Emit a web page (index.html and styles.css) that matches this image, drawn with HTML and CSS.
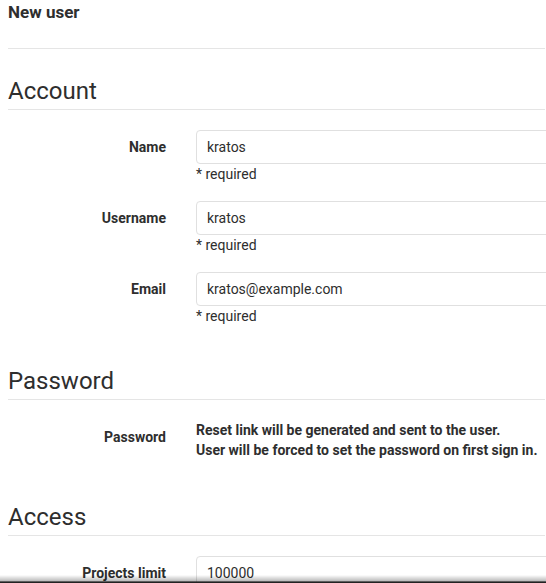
FILE: index.html
```html
<!DOCTYPE html>
<html>
<head>
<meta charset="utf-8">
<link rel="stylesheet" href="styles.css">
</head>
<body>
<div class="page">
  <h3 class="page-title">New user</h3>

  <section class="section">
    <h4 class="section-title">Account</h4>
    <div class="form-group">
      <label class="control-label">Name</label>
      <div class="control">
        <input class="form-control" type="text" value="kratos">
        <div class="help">* required</div>
      </div>
    </div>
    <div class="form-group">
      <label class="control-label">Username</label>
      <div class="control">
        <input class="form-control" type="text" value="kratos">
        <div class="help">* required</div>
      </div>
    </div>
    <div class="form-group">
      <label class="control-label">Email</label>
      <div class="control">
        <input class="form-control" type="text" value="kratos@example.com">
        <div class="help">* required</div>
      </div>
    </div>
  </section>

  <section class="section">
    <h4 class="section-title">Password</h4>
    <div class="form-group static">
      <label class="control-label">Password</label>
      <div class="control">
        <p class="static-text">Reset link will be generated and sent to the user.<br>User will be forced to set the password on first sign in.</p>
      </div>
    </div>
  </section>

  <section class="section">
    <h4 class="section-title">Access</h4>
    <div class="form-group">
      <label class="control-label">Projects limit</label>
      <div class="control">
        <input class="form-control" type="text" value="100000">
      </div>
    </div>
  </section>
</div>
<div class="bottom-shadow"></div>
</body>
</html>
```

FILE: styles.css
```css
html, body {
  margin: 0;
  padding: 0;
  background: #fff;
  overflow: hidden;
}
body {
  font-family: Roboto, "Liberation Sans", sans-serif;
  font-size: 14px;
  line-height: 20px;
  color: #2e2e2e;
}
.page {
  padding: 0 1px 0 8px;
}
.page-title {
  margin: 0 0 4px;
  font-size: 17px;
  font-weight: 700;
  line-height: 24px;
  padding-bottom: 24px;
  border-bottom: 1px solid #e5e5e5;
}
.section {
  display: flow-root;
}
.section-title {
  margin: 23px 0 20px;
  font-size: 24px;
  font-weight: 400;
  line-height: 31px;
  padding-bottom: 2px;
  border-bottom: 1px solid #e5e5e5;
}
.form-group {
  display: grid;
  grid-template-columns: 158px 1fr;
  column-gap: 30px;
  margin-bottom: 17px;
}
.form-group.static {
  margin-bottom: 19px;
}
.control-label {
  text-align: right;
  font-weight: 700;
  padding-top: 7px;
}
.control {
  min-width: 0;
}
.form-control {
  display: block;
  box-sizing: border-box;
  width: 420px;
  height: 34px;
  padding: 6px 10px;
  font-family: inherit;
  font-size: 14px;
  color: #2e2e2e;
  border: 1px solid #e0e0e0;
  border-radius: 4px;
  background: #fff;
  outline: none;
}
.help {
  margin-top: 0;
  color: #2e2e2e;
}
.static-text {
  margin: 0;
  font-weight: 700;
  line-height: 20px;
  padding-top: 0;
}
.bottom-shadow {
  position: fixed;
  left: 0;
  right: 0;
  bottom: 0;
  height: 8px;
  background: linear-gradient(to bottom, rgba(0,0,0,0), rgba(0,0,0,0.25) 70%, #222 88%, #222);
}
```
